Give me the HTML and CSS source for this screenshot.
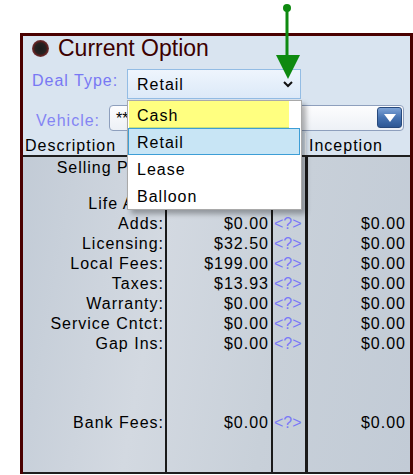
FILE: index.html
```html
<!DOCTYPE html>
<html lang="en">
<head>
  <meta charset="UTF-8">
  <meta name="viewport" content="width=device-width, initial-scale=1.0">
  <title>Current Option</title>
  <link rel="stylesheet" href="styles.css">
</head>
<body>
  <div class="panel">
    <div class="title-row">
      <span class="radio"></span>
      <span class="title">Current Option</span>
    </div>

    <div class="field-row deal-row">
      <label class="field-label deal-label">Deal Type:</label>
      <div class="select">
        <span>Retail</span>
        <svg class="chevron" width="10" height="7" viewBox="0 0 10 7">
          <polyline points="1,1 5,5 9,1" fill="none" stroke="#111" stroke-width="2"/>
        </svg>
      </div>
    </div>

    <div class="field-row vehicle-row">
      <label class="field-label vehicle-label">Vehicle:</label>
      <div class="combo">
        <span class="combo-text">**</span>
        <span class="combo-btn">
          <svg width="14" height="10" viewBox="0 0 14 10">
            <polygon points="1,1 13,1 7,9" fill="#fff"/>
          </svg>
        </span>
      </div>
    </div>

    <div class="col-head">
      <div class="head-desc">Description</div>
      <div class="head-inc">Inception</div>
    </div>

    <table class="grid">
      <tr class="first">
        <td class="desc">Selling Price:</td><td class="amt"></td><td class="help"></td><td class="inc"></td>
      </tr>
      <tr class="gap-16"><td></td><td></td><td></td><td></td></tr>
      <tr>
        <td class="desc">Life A&amp;H:</td><td class="amt"></td><td class="help"></td><td class="inc"></td>
      </tr>
      <tr>
        <td class="desc">Adds:</td><td class="amt">$0.00</td><td class="help">&lt;?&gt;</td><td class="inc">$0.00</td>
      </tr>
      <tr>
        <td class="desc">Licensing:</td><td class="amt">$32.50</td><td class="help">&lt;?&gt;</td><td class="inc">$0.00</td>
      </tr>
      <tr>
        <td class="desc">Local Fees:</td><td class="amt">$199.00</td><td class="help">&lt;?&gt;</td><td class="inc">$0.00</td>
      </tr>
      <tr>
        <td class="desc">Taxes:</td><td class="amt">$13.93</td><td class="help">&lt;?&gt;</td><td class="inc">$0.00</td>
      </tr>
      <tr>
        <td class="desc">Warranty:</td><td class="amt">$0.00</td><td class="help">&lt;?&gt;</td><td class="inc">$0.00</td>
      </tr>
      <tr>
        <td class="desc">Service Cntct:</td><td class="amt">$0.00</td><td class="help">&lt;?&gt;</td><td class="inc">$0.00</td>
      </tr>
      <tr>
        <td class="desc">Gap Ins:</td><td class="amt">$0.00</td><td class="help">&lt;?&gt;</td><td class="inc">$0.00</td>
      </tr>
      <tr class="gap-59"><td></td><td></td><td></td><td></td></tr>
      <tr>
        <td class="desc">Bank Fees:</td><td class="amt">$0.00</td><td class="help">&lt;?&gt;</td><td class="inc">$0.00</td>
      </tr>
      <tr class="gap-39"><td></td><td></td><td></td><td></td></tr>
    </table>

    <ul class="dropdown">
      <li class="opt opt-hover">Cash</li>
      <li class="opt opt-selected">Retail</li>
      <li class="opt">Lease</li>
      <li class="opt">Balloon</li>
    </ul>
  </div>

  <svg class="pointer" width="36" height="90" viewBox="0 0 36 90">
    <circle cx="17" cy="8" r="4" fill="#0e8a10"/>
    <rect x="15.5" y="8" width="3" height="50" fill="#0e8a10"/>
    <polygon points="6,55 30,55 18,79" fill="#0e8a10"/>
  </svg>
</body>
</html>
```

FILE: styles.css
```css
body {
  margin: 0;
  background: #fff;
  font-family: "Liberation Sans", Arial, sans-serif;
  font-size: 16px;
  color: #000;
}
.panel {
  position: relative;
  width: 387px;
  margin: 33px 0 0 20px;
  border: 3px solid #4a0000;
  border-bottom: none;
  background: #d9e4f0;
}
.title-row {
  display: flex;
  align-items: center;
  gap: 9px;
  height: 24px;
  padding-left: 9px;
}
.radio {
  width: 17px;
  height: 17px;
  border-radius: 50%;
  background: radial-gradient(circle, #1c1c1c 0%, #262222 46%, #5a1e1e 58%, #6e3a3c 70%, #9a868c 84%, #c8bcc4 94%, rgba(217,228,240,0) 100%);
}
.title {
  font-size: 23px;
  line-height: 24px;
  color: #3c0000;
}
.field-row {
  display: flex;
  align-items: flex-start;
}
.field-label {
  box-sizing: border-box;
  line-height: 20px;
  letter-spacing: 1px;
  color: #7878f4;
}
.deal-row {
  margin-top: 9px;
  height: 30px;
}
.deal-label {
  width: 104px;
  padding-left: 9px;
  margin-top: 2px;
}
.select {
  position: relative;
  box-sizing: border-box;
  width: 174px;
  height: 30px;
  padding: 2px 0 0 9px;
  line-height: 26px;
  letter-spacing: 1px;
  border: 1px solid #93bce4;
  background: linear-gradient(#eef5fd, #dce9f8);
}
.chevron {
  position: absolute;
  left: 155px;
  top: 11px;
}
.vehicle-row {
  margin-top: 6px;
  height: 26px;
}
.vehicle-label {
  width: 86px;
  padding-left: 13px;
  margin-top: 6px;
  color: #8484f4;
}
.combo {
  position: relative;
  box-sizing: border-box;
  width: 295px;
  height: 26px;
  padding-left: 6px;
  line-height: 26px;
  border: 1px solid #8e9fbd;
  border-radius: 4px;
  background: linear-gradient(#fdfdfe, #edf1f6);
}
.combo-btn {
  position: absolute;
  right: 1px;
  top: 1px;
  box-sizing: border-box;
  width: 25px;
  height: 21px;
  display: flex;
  align-items: center;
  justify-content: center;
  border: 1px solid #27497c;
  border-radius: 3px;
  background: linear-gradient(#7ea3d6, #4673b2 50%, #2d5794);
}
.col-head {
  display: flex;
  margin-top: 2px;
  height: 22px;
  line-height: 20px;
  letter-spacing: 1px;
}
.head-desc {
  flex: 1;
  padding: 3px 0 0 2px;
}
.head-inc {
  box-sizing: border-box;
  width: 105px;
  padding: 3px 0 0 3px;
  border-left: 1px solid #f3f7fb;
}
.grid {
  width: 387px;
  table-layout: fixed;
  border-collapse: separate;
  border-spacing: 0;
  border-top: 2px solid #1e1e1e;
  border-bottom: 2px solid #1e1e1e;
  background: linear-gradient(100deg, #c2cbd6 0%, #d3d9e1 35%, #c8d0d9 65%, #c2cbd6 100%);
}
.grid td {
  box-sizing: border-box;
  height: 20px;
  padding: 0;
  line-height: 20px;
  vertical-align: top;
  letter-spacing: 1px;
  white-space: nowrap;
  overflow: hidden;
}
.grid .first td {
  height: 21px;
  padding-top: 1px;
}
.grid .gap-16 td { height: 16px; }
.grid .gap-59 td { height: 59px; }
.grid .gap-39 td { height: 39px; }
.grid td:nth-child(1) {
  width: 144px;
  text-align: right;
  padding-right: 1px;
  border-right: 2px solid #1a1a1a;
}
.grid td:nth-child(2) {
  width: 106px;
  text-align: right;
  padding-right: 2px;
  border-right: 2px solid #1a1a1a;
}
.grid td:nth-child(3) {
  width: 35px;
  padding-left: 1px;
  font-size: 16px;
  letter-spacing: 0;
  color: #7a7af6;
  border-right: 3px solid #1a1a1a;
}
.grid td:nth-child(4) {
  width: 102px;
  text-align: right;
  padding-right: 4px;
}
.dropdown {
  position: absolute;
  left: 104px;
  top: 64px;
  z-index: 2;
  box-sizing: border-box;
  width: 175px;
  height: 110px;
  margin: 0;
  padding: 0;
  list-style: none;
  background: #fff;
  border: 1px solid #a9a9a9;
  box-shadow: 4px 4px 5px rgba(0, 0, 0, 0.3);
}
.opt {
  box-sizing: border-box;
  height: 27px;
  margin: 0 1px;
  padding: 2px 0 0 8px;
  line-height: 25px;
  font-size: 16px;
  letter-spacing: 1px;
}
.opt-hover {
  margin-right: 12px;
  background: #ffff80;
  border-bottom: 1px solid #c9e07a;
}
.opt-selected {
  margin-left: 0;
  padding-left: 8px;
  padding-top: 1px;
  border: 1px solid #3d9ed6;
  background: #c8e5f5;
}
.pointer {
  position: absolute;
  left: 270px;
  top: 0;
  z-index: 3;
}
```
